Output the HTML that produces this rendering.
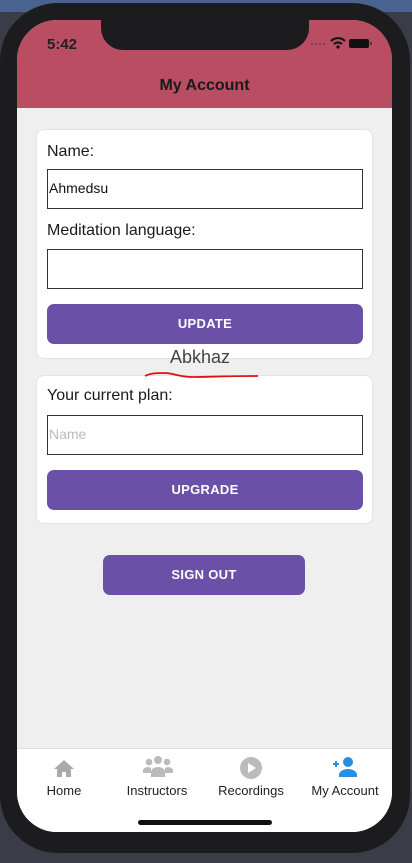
<!DOCTYPE html>
<html><head><meta charset="utf-8"><style>
*{box-sizing:border-box;margin:0;padding:0}
body{width:412px;height:863px;overflow:hidden;background:#3a3c48;font-family:"Liberation Sans",sans-serif;position:relative}
.bgtop{position:absolute;left:0;top:0;width:412px;height:12px;background:#4a6290}
.phone{position:absolute;left:0;top:3px;width:410px;height:850px;background:#1c1c1e;border-radius:58px}
.screen{position:absolute;left:17px;top:20px;width:375px;height:812px;background:#efefef;border-radius:40px;overflow:hidden}
.hdr{position:absolute;left:0;top:0;width:375px;height:88px;background:#b94d62}
.notch{position:absolute;left:84px;top:0;width:208px;height:30px;background:#1c1c1e;border-radius:0 0 22px 22px}
.time{position:absolute;left:30px;top:16px;font-size:15px;font-weight:bold;color:#222}
.title{position:absolute;left:0;width:375px;top:57px;text-align:center;font-size:16px;font-weight:bold;color:#1a1a1a}
.card{position:absolute;left:19px;width:337px;background:#fff;border-radius:8px;border:1px solid #e4e4e4}
.lbl{position:absolute;left:10px;font-size:16px;color:#1a1a1a}
.inp{position:absolute;left:10px;width:316px;height:40px;border:1px solid #333;font-size:14px;padding:10px 0 0 1px;color:#111}
.btn{position:absolute;background:#6b50a8;border-radius:7px;color:#fff;font-weight:bold;font-size:13px;text-align:center;line-height:40px;letter-spacing:.3px}
.tab{position:absolute;left:0;top:728px;width:375px;height:84px;background:#fff;border-top:1px solid #ddd}
.ti{position:absolute;top:34px;font-size:13px;color:#222;text-align:center;width:94px}
.home{position:absolute;left:121px;top:800px;width:134px;height:5px;background:#111;border-radius:3px}
</style></head><body>
<div class="bgtop"></div>
<div class="phone"></div>
<div class="screen">
 <div class="hdr"></div>
 <div class="notch"></div>
 <div class="time">5:42</div>
 <svg style="position:absolute;left:292px;top:16px" width="70" height="14"><g fill="#3a2228" opacity=".5"><circle cx="3" cy="8" r="1"/><circle cx="7" cy="8" r="1"/><circle cx="11" cy="8" r="1"/><circle cx="15" cy="8" r="1"/></g><path d="M22 5a10 10 0 0 1 14 0M25 8a6 6 0 0 1 8 0" stroke="#111" stroke-width="2" fill="none"/><circle cx="29" cy="11" r="1.6" fill="#111"/><rect x="40" y="3" width="20" height="9" rx="2" fill="#111"/><rect x="61" y="6" width="2" height="3" fill="#111" opacity=".5"/></svg>
 <div class="title">My Account</div>
 <div class="card" style="top:109px;height:230px">
  <div class="lbl" style="top:13px">Name:</div>
  <div class="inp" style="top:39px">Ahmedsu</div>
  <div class="lbl" style="top:92px">Meditation language:</div>
  <div class="inp" style="top:119px"></div>
  <div class="btn" style="left:10px;top:174px;width:316px">UPDATE</div>
 </div>
 <div class="card" style="top:355px;height:149px">
  <div class="lbl" style="top:11px">Your current plan:</div>
  <div class="inp" style="top:39px;color:#bbb">Name</div>
  <div class="btn" style="left:10px;top:94px;width:316px">UPGRADE</div>
 </div>
 <div style="position:absolute;left:153px;top:327px;font-size:18px;color:#444">Abkhaz</div>
 <svg style="position:absolute;left:125px;top:348px" width="120" height="12"><path d="M3 8c6-3 12-3 20-3s14 4 28 4 30-1 65-1" stroke="#d11" stroke-width="1.8" fill="none"/></svg>
 <div class="btn" style="left:86px;top:535px;width:202px">SIGN OUT</div>
 <div class="tab">
  <svg style="position:absolute;left:36px;top:9px" width="22" height="20"><path d="M11 2 1 11h3v8h5v-5h4v5h5v-8h3z" fill="#aaa"/></svg>
  <svg style="position:absolute;left:126px;top:6px" width="30" height="24" fill="#bbb"><circle cx="15" cy="5" r="4"/><circle cx="6" cy="7" r="3.3"/><circle cx="24" cy="7" r="3.3"/><path d="M8 22v-5a7 5 0 0 1 14 0v5z"/><path d="M0 18v-3a5 4 0 0 1 8-2v5zM30 18v-3a5 4 0 0 0-8-2v5z"/></svg>
  <svg style="position:absolute;left:222px;top:7px" width="24" height="24"><circle cx="12" cy="12" r="11" fill="#bbb"/><path d="M9 7v10l8-5z" fill="#fff"/></svg>
  <svg style="position:absolute;left:314px;top:7px" width="28" height="22" fill="#2a8ee0"><path d="M2 8h6M5 5v6" stroke="#2a8ee0" stroke-width="2"/><circle cx="17" cy="6" r="5"/><path d="M8 21v-2a9 6 0 0 1 18 0v2z"/></svg>
  <div class="ti" style="left:0">Home</div>
  <div class="ti" style="left:93px">Instructors</div>
  <div class="ti" style="left:187px">Recordings</div>
  <div class="ti" style="left:281px">My Account</div>
 </div>
 <div class="home"></div>
</div>
</body></html>
